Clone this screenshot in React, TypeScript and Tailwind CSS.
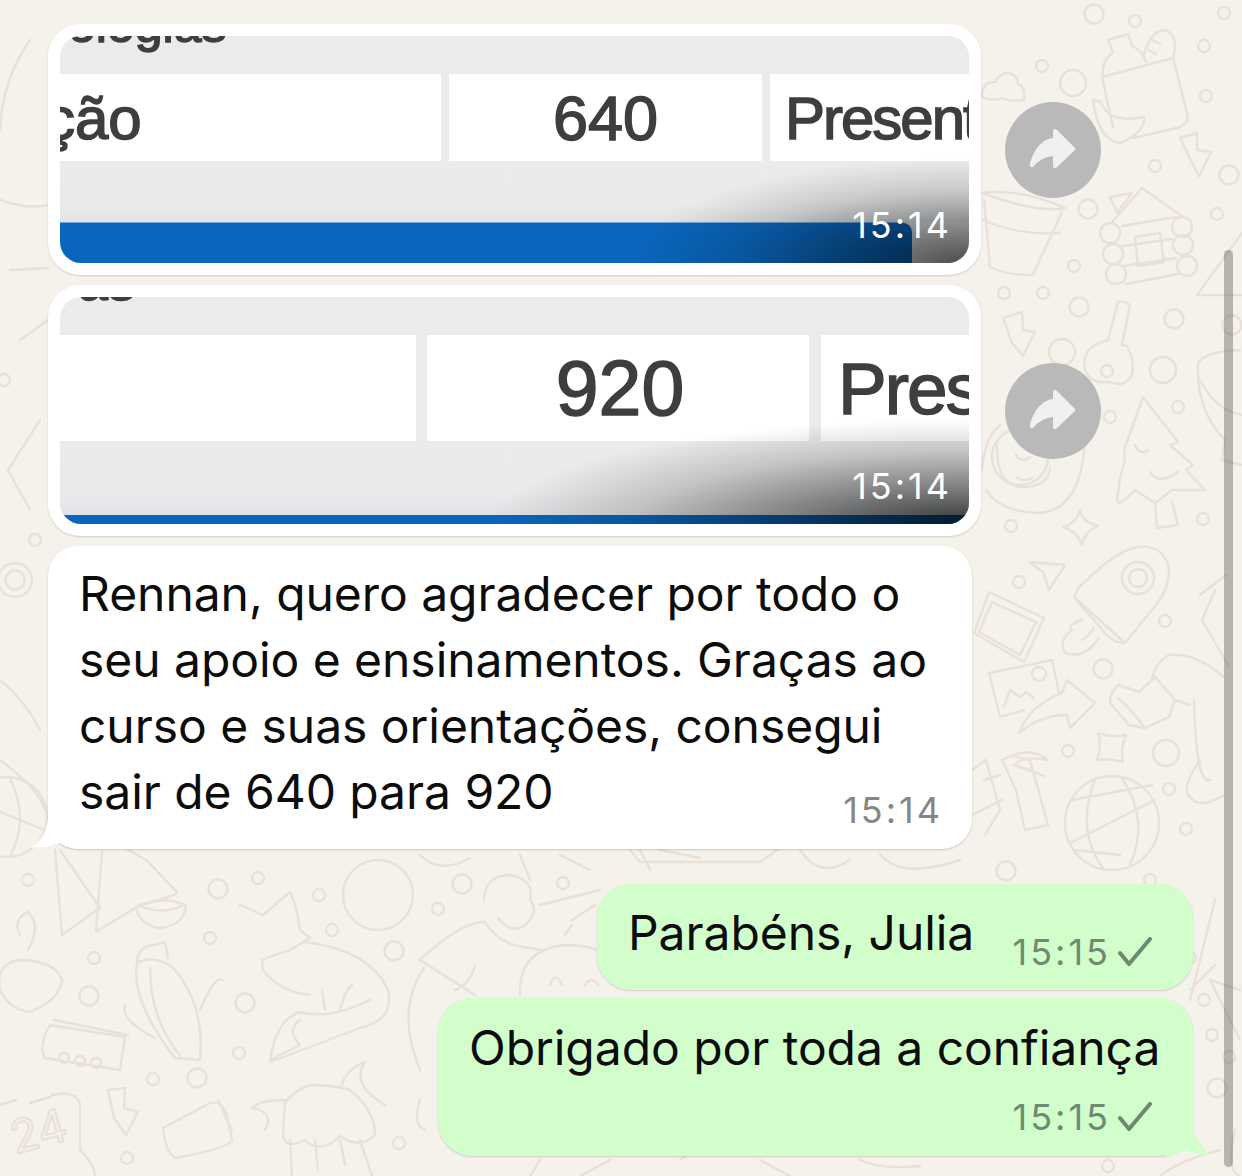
const circles: [number, number, number][] = [
  [1094, 14, 9.5], [1135, 21, 6], [1224, 13, 6], [1204, 46, 6], [1042, 66, 6], [1073, 83, 13], [1206, 96, 6],
  [1155, 166, 6], [1229, 175, 9.5], [1088, 209, 9.5], [1217, 214, 6], [1074, 266, 6], [1004, 293, 6], [1043, 293, 6],
  [1079, 307, 9.5], [1062, 352, 13], [1174, 319, 9.5], [1163, 370, 13], [1178, 407, 6], [1110, 417, 6], [1203, 519, 6],
  [1011, 526, 6], [1107, 371, 6], [1232, 325, 9.5], [1019, 582, 6], [1165, 621, 6], [1103, 669, 9.5], [1068, 751, 6],
  [1166, 753, 13], [1169, 789, 6], [1186, 829, 6], [1006, 871, 9.5], [1150, 880, 6], [28, 880, 6], [218, 889, 9.5],
  [258, 878, 6], [319, 895, 6], [332, 930, 6], [210, 938, 6], [94, 958, 6], [394, 951, 9.5], [89, 996, 9.5],
  [245, 1003, 9.5], [239, 1053, 6], [153, 1079, 6], [197, 1078, 9.5], [127, 1158, 6], [399, 1143, 6], [378, 895, 35],
  [462, 884, 9.5], [438, 909, 6], [563, 883, 6], [1204, 1000, 6], [1217, 1088, 9.5], [15, 580, 9.5], [15, 580, 17],
  [4, 380, 6], [35, 540, 6], [1108, 1166, 6], [1190, 958, 6], [1212, 1035, 6], [1229, 1057, 6],
]

const doodlePaths = [
  // top right: bag, bottle, banana, bolt, cloud, house, bucket
  'M1102 77 L1173 58 L1187 113 Q1190 124 1177 128 L1133 138 M1102 77 L1113 127',
  'M1103 75 Q1101 62 1113 52 L1108 40 L1128 34 L1132 46 Q1142 50 1146 62',
  'M1143 57 Q1150 32 1163 30 Q1176 32 1175 50 L1173 58 M1152 40 L1160 44 M1148 50 L1156 54',
  'M1093 100 L1101 102 Q1108 124 1144 117 Q1146 132 1120 143 Q1098 140 1093 100',
  'M1180 138 L1197 133 L1197 150 L1211 152 L1199 176 L1192 163 Z',
  'M982 97 Q982 82 995 82 Q1002 70 1012 74 Q1018 76 1018 84 Q1026 86 1024 100 Q1010 102 1002 98 Q992 102 982 97',
  'M1112 222 L1142 188 L1183 217 M1110 197 L1132 193 L1117 213 Z M1122 226 L1176 217 M1122 246 L1172 239 M1124 266 L1176 258 M1126 284 L1178 274',
  'M1135 237 L1160 233 L1164 262 L1138 266 Z',
  'M982 193 Q1020 188 1065 208 Q1040 214 982 193 M983 220 Q1020 236 1060 233 M984 200 L990 267 Q1010 276 1033 275 L1062 212',
  'M1197 295 L1242 233 M1197 295 L1242 295',
  // key, avocado, tree, star
  'M1003 318 L1022 312 L1023 330 L1035 332 L1023 356 L1012 343 Z',
  'M1118 302 Q1122 300 1130 305 L1122 345 L1127 346 Q1135 360 1132 375 Q1125 388 1110 382 Q1085 385 1084 362 Q1086 345 1108 340 Z',
  'M982 470 Q984 438 1000 425 M1040 513 Q1000 512 986 490 M1040 513 Q1075 510 1083 460 L1085 440',
  'M997 445 Q996 484 1020 487 Q1048 488 1050 468 M1017 478 Q1025 482 1032 478 M1016 455 Q1022 464 1030 457',
  'M1143 397 L1178 442 L1170 445 L1193 465 L1186 470 L1205 490 L1172 490 L1155 503 L1135 490 Q1118 508 1117 500 L1120 478 L1125 460 L1124 450 Z',
  'M1155 503 L1157 528 L1178 525 L1172 502 M1150 472 Q1158 486 1178 472 M1135 445 Q1140 456 1148 450',
  'M1080 510 Q1082 522 1098 526 Q1084 532 1082 545 Q1078 532 1063 527 Q1076 524 1080 510 Z',
  'M1198 365 Q1200 352 1240 350 M1198 365 Q1196 410 1225 440 L1222 460 L1242 465 M1200 380 Q1215 410 1242 415',
  // rocket, plane, frame, photo, arrow, stocking
  'M1087 580 Q1115 552 1137 547 Q1162 544 1169 567 Q1170 590 1152 610 L1125 643 Q1115 644 1105 633 L1074 597 Q1078 586 1087 580 M1074 597 L1125 643',
  'M1065 653 Q1058 640 1072 630 Q1066 625 1082 620 M1099 638 Q1084 660 1065 653 M1082 640 Q1090 635 1094 628',
  'M1029 562 L1065 565 L1049 590 L1043 572 Z',
  'M989 592 L1044 618 L1024 662 L974 633 Z M992 602 L1036 622 L1020 655 L979 632 Z',
  'M989 673 L1052 660 L1059 692 M1000 717 L989 673 M1004 707 L1010 690 L1020 697 L1026 692 L1034 698 M1000 717 L1024 710',
  'M1019 733 Q1030 705 1062 693 L1067 680 L1095 703 L1070 728 L1067 715 Q1040 715 1019 733 Z',
  'M1119 685 L1139 692 L1155 677 L1175 700 L1169 717 L1145 728 L1129 725 L1110 703 Q1110 690 1119 685 M1118 698 Q1130 708 1145 728',
  'M1152 677 Q1158 660 1169 655 Q1195 652 1224 677 M1175 700 L1190 705 M1194 700 Q1196 785 1210 780 M1200 760 Q1180 790 1190 797 Q1200 810 1224 795',
  'M1098 733 Q1112 738 1126 735 Q1120 750 1123 762 Q1110 758 1097 760 Q1102 745 1098 733 Z',
  'M1215 590 L1202 620 L1228 665 M1200 595 L1226 575',
  // globe
  'M1065 823 a47 47 0 1 0 94 0 a47 47 0 1 0 -94 0 Z M1072 800 L1152 785 M1070 843 L1155 800 M1075 850 L1120 855 M1095 780 Q1075 830 1103 868 M1122 778 Q1150 820 1130 865',
  // bamboo and palm at right of message
  'M972 770 L986 760 L1000 810 L985 835 M1002 760 L1016 790 L1025 830 L1048 825 L1030 760 L1012 756 M1002 760 Q1030 745 1048 760 Q1025 755 1014 765 Q1030 770 1044 776 M984 780 L1000 775 M972 815 L1002 800',
  // bottom left: lamp, megaphone, fox, cactus, box, calendar, bolt, jar, hut
  'M55 850 L62 935 L100 908 L60 850 M102 852 L96 932 L140 905 Q180 895 177 892 L146 860 L120 845',
  'M136 908 Q140 925 160 928 Q185 925 186 905 Q160 895 136 908 M140 906 Q162 915 182 906',
  'M20 935 Q12 920 28 912 Q42 925 28 950 M18 960 Q-5 965 0 990 Q10 1010 30 1012 Q60 1000 62 980 Q55 960 18 960',
  'M240 905 L263 915 L290 892 Q297 905 300 930 L310 938 L290 950 L275 955 L262 960 L263 970 Q280 992 310 995 M305 942 Q370 950 388 990 Q395 1020 360 1028 L270 1062 Q275 1020 300 1012 Q330 1020 370 1000 M340 1010 Q345 990 352 985 M322 990 L325 1010 M300 1020 Q286 1030 300 1045 L270 1060',
  'M137 960 Q140 945 155 945 L165 942 L168 958 M137 963 Q130 1000 175 1058 L200 1060 Q205 1000 170 965 Q150 955 137 963 M150 968 Q150 1020 182 1058 M125 1005 Q120 1020 155 1038 M200 1010 Q215 975 222 980',
  'M50 1025 L125 1037 L120 1070 L45 1058 Q38 1045 50 1025 M54 1020 L128 1035',
  'M64 1053 a5 5 0 1 0 .1 0 M80 1056 a5 5 0 1 0 .1 0 M96 1058 a5 5 0 1 0 .1 0',
  'M0 1105 L16 1100 M30 1103 L50 1097 M52 1095 Q78 1090 80 1105 L80 1150 Q95 1165 95 1176',
  'M108 1090 L125 1088 L124 1108 L138 1112 L126 1135 L114 1118 Z',
  'M163 1128 L210 1103 Q220 1100 226 1112 L232 1140 Q230 1148 175 1158 Q165 1150 163 1128 M218 1100 L232 1130',
  'M285 1103 Q295 1090 310 1085 Q335 1085 350 1090 Q375 1110 375 1135 Q360 1150 340 1136 Q320 1155 305 1140 Q285 1150 283 1135 Z M290 1140 L292 1176 M360 1140 L372 1176 M315 1140 L318 1170 M340 1140 L345 1165',
  'M285 1100 Q260 1100 252 1108 Q275 1112 265 1130 M342 1085 Q345 1070 365 1062 Q350 1085 385 1105',
  // under the first outgoing bubble: man and round face
  'M484 900 Q485 875 510 875 Q535 880 530 900 Q540 912 525 925 Q512 935 498 918 M485 922 Q460 922 420 960 L475 995 M485 922 Q498 945 530 948 L540 950 M475 965 Q470 985 455 990 M424 968 Q395 1010 420 1070 M420 1100 Q412 1125 425 1130',
  'M520 995 Q518 950 565 945 Q590 945 600 952 M550 985 Q555 970 562 985 M585 985 Q592 975 598 985',
  'M540 905 L600 890 M572 920 L595 905 M572 925 L565 935',
  'M680 1160 Q690 1150 720 1155 M760 1160 L790 1176 M860 1160 Q880 1170 920 1166 M540 1160 L530 1176 M610 1160 L580 1176',
  'M630 850 L640 862 L760 862 L780 848 M640 850 L650 870 M660 850 L700 858 M800 850 Q820 880 850 860 M880 854 Q900 880 960 860 M420 855 Q440 875 470 858 M520 855 L530 880 M560 855 L590 870',
  'M30 40 Q2 80 0 130 M10 270 L48 268 M0 200 Q28 210 48 205 M40 420 L8 470 L30 510 M0 680 Q25 700 40 730 M0 760 Q40 790 45 810 M20 340 L48 320',
  'M7 777 a40 40 0 1 0 .1 0 M-30 800 L45 830 M10 778 Q30 820 10 856',
  'M1160 1176 Q1180 1160 1220 1150 M1190 1000 L1215 900 M1215 965 L1190 990 M1240 990 L1210 980 L1240 1040 M1235 1130 Q1225 1170 1240 1176',
]

const TIME = '[font-family:Inter,sans-serif] tracking-[3px]'
const IMAGE_TEXT = "[font-family:'Liberation_Sans',sans-serif] text-[#3e3e3e] [-webkit-text-stroke:1.5px_#3e3e3e] blur-[0.7px] whitespace-nowrap"

function Doodles() {
  return (
    <svg className="absolute inset-0" width="1242" height="1176" viewBox="0 0 1242 1176" fill="none" stroke="#e9e0d7" strokeWidth="2.4" strokeLinejoin="round" strokeLinecap="round">
      {circles.map(([x, y, r], i) => <circle key={i} cx={x} cy={y} r={r} />)}
      {doodlePaths.map((d, i) => <path key={i} d={d} />)}
      {/* logs on the cabin */}
      <circle cx="1110" cy="233" r="10" />
      <circle cx="1113" cy="254" r="10" />
      <circle cx="1116" cy="274" r="10" />
      <circle cx="1182" cy="227" r="10" />
      <circle cx="1183" cy="245" r="10" />
      <circle cx="1187" cy="266" r="10" />
      <circle cx="1020" cy="457" r="28" />
      <circle cx="1138" cy="578" r="16" />
      <circle cx="1138" cy="578" r="9" />
      <circle cx="1039" cy="674" r="7" />
      <text x="12" y="1150" fontSize="46" fontFamily="Inter, sans-serif" strokeWidth="2" transform="rotate(-15 30 1140)">24</text>
    </svg>
  )
}

function Forward() {
  return (
    <div className="w-24 h-24 rounded-full bg-[#b9b9b9] flex items-center justify-center ml-6 shrink-0">
      <svg width="48" height="48" viewBox="0 0 48 48">
        <path d="M26 3 Q24 3 24 6 L24 12 Q8 14 1 37 Q0 42 4 41 Q12 31 24 30 L24 39 Q24 43 27 42 L46 24 Q47 23 46 22 L28 4 Q27 3 26 3 Z" fill="#f0f0f2" />
      </svg>
    </div>
  )
}

function Check() {
  return (
    <svg width="36" height="30" viewBox="0 0 36 30" fill="none" stroke="#6d8a70" strokeWidth="4" strokeLinecap="round" strokeLinejoin="round">
      <path d="M3 16 L12 27 L33 2" />
    </svg>
  )
}

function PhotoBubble({ children, time, overlay }: { children: React.ReactNode; time: string; overlay: string }) {
  return (
    <div className="flex items-center pl-12">
      <div className="w-[933px] h-[251px] bg-white rounded-[32px] p-3 shadow-[0_1px_2px_rgba(0,0,0,0.15)] shrink-0">
        <div className="relative w-[909px] h-[227px] rounded-[21px] overflow-hidden bg-[#ebebeb] flex flex-col">
          {children}
          <div className={`absolute inset-0 ${overlay}`} />
          <span className={`absolute right-[17px] bottom-[20px] text-white text-[36px] leading-[36px] ${TIME}`}>{time}</span>
        </div>
      </div>
      <Forward />
    </div>
  )
}

export default function App() {
  return (
    <div className="relative w-[1242px] h-[1176px] overflow-hidden bg-[#f5f1eb] [font-family:Inter,sans-serif]">
      <Doodles />
      <div className="relative flex flex-col pt-6">
        <PhotoBubble time="15:14" overlay="bg-[radial-gradient(340px_105px_at_100%_100%,rgba(0,0,0,0.68)_0%,rgba(0,0,0,0.42)_35%,rgba(0,0,0,0.14)_70%,rgba(0,0,0,0)_100%)]">
          <div className="h-[38px] overflow-hidden pl-2 shrink-0">
            <p className={`text-[50px] leading-[50px] -mt-[36px] ${IMAGE_TEXT}`}>ologias</p>
          </div>
          <div className="flex gap-2 h-[87px] shrink-0">
            <div className="w-[381px] bg-white overflow-hidden flex items-center pt-[2px] shrink-0">
              <span className={`text-[60px] -ml-[15px] ${IMAGE_TEXT}`}>ção</span>
            </div>
            <div className="w-[313px] bg-white flex items-center justify-center pt-[2px] shrink-0">
              <span className={`text-[63px] ${IMAGE_TEXT}`}>640</span>
            </div>
            <div className="flex-1 bg-white overflow-hidden flex items-center pl-[15px] pt-[2px]">
              <span className={`text-[60px] tracking-[-2px] ${IMAGE_TEXT}`}>Present</span>
            </div>
          </div>
          <div className="h-[61px] shrink-0 bg-gradient-to-b from-[#ebebeb] from-70% to-[#e2e4e6]" />
          <div className="h-[41px] w-[852px] bg-[#0a66bd] border-t border-[#6fa8dc] rounded-tr-[10px] shrink-0" />
        </PhotoBubble>

        <div className="mt-[10px]">
          <PhotoBubble time="15:14" overlay="bg-[radial-gradient(480px_105px_at_100%_100%,rgba(0,0,0,0.76)_0%,rgba(0,0,0,0.46)_35%,rgba(0,0,0,0.16)_70%,rgba(0,0,0,0)_100%)]">
            <div className="h-[38px] overflow-hidden pl-[18px] shrink-0">
              <p className={`text-[54px] leading-[54px] -mt-[43px] ${IMAGE_TEXT}`}>as</p>
            </div>
            <div className="flex h-[106px] shrink-0">
              <div className="w-[356px] bg-white shrink-0" />
              <div className="w-[382px] ml-[11px] pl-1 pt-[2px] bg-white flex items-center justify-center shrink-0">
                <span className={`text-[77px] ${IMAGE_TEXT}`}>920</span>
              </div>
              <div className="flex-1 ml-3 bg-white overflow-hidden flex items-center pl-[17px] pt-[2px]">
                <span className={`text-[73px] tracking-[-2px] ${IMAGE_TEXT}`}>Pres</span>
              </div>
            </div>
            <div className="h-[74px] shrink-0 bg-gradient-to-b from-[#ebebeb] from-70% to-[#e0e3e7]" />
            <div className="h-[9px] bg-[#0a66bd] shrink-0" />
          </PhotoBubble>
        </div>

        <div className="relative w-[924px] h-[303px] ml-12 mt-[10px] bg-white rounded-[30px] pl-[31px] pt-[15px] pr-[29px] shadow-[0_1px_2px_rgba(0,0,0,0.18)] text-[48px] leading-[66px] tracking-[-0.05px] text-[#0c0c0c]">
          <p className="whitespace-nowrap">Rennan, quero agradecer por todo o</p>
          <p className="whitespace-nowrap">seu apoio e ensinamentos. Graças ao</p>
          <p className="whitespace-nowrap">curso e suas orientações, consegui</p>
          <div className="flex justify-between items-end">
            <span className="whitespace-nowrap">sair de 640 para 920</span>
            <span className={`text-[36px] leading-[36px] text-[#868686] mb-[-3px] ${TIME}`}>15:14</span>
          </div>
          <svg className="absolute left-[-18px] bottom-0" width="48" height="30" viewBox="0 0 48 30">
            <path d="M18 0 Q16 20 0 28.5 Q18 29 32 23 Q40 29 48 29 L48 0 Z" fill="#ffffff" />
          </svg>
        </div>

        <div className="self-end mr-[49px] mt-[35px] w-[596px] h-[106px] bg-[#d1fecb] rounded-[34px] pl-[31px] pr-[40px] flex items-start justify-between shadow-[0_1px_2px_rgba(0,0,0,0.15)] text-[48px] leading-[66px] tracking-[-0.05px] text-[#0c0c0c]">
          <span className="mt-[16px] whitespace-nowrap">Parabéns, Julia</span>
          <div className="flex items-center gap-[6px] mt-[50px]">
            <span className={`text-[36px] leading-[36px] text-[#6f8a72] ${TIME}`}>15:15</span>
            <Check />
          </div>
        </div>

        <div className="relative self-end mr-[49px] mt-2 w-[755px] h-[158px] bg-[#d1fecb] rounded-[34px] pl-[31px] pr-[40px] pt-[17px] shadow-[0_1px_2px_rgba(0,0,0,0.15)] text-[48px] leading-[66px] tracking-[-0.05px] text-[#0c0c0c]">
          <p className="whitespace-nowrap">Obrigado por toda a confiança</p>
          <div className="flex items-center justify-end gap-[6px] mt-[18px]">
            <span className={`text-[36px] leading-[36px] text-[#6f8a72] ${TIME}`}>15:15</span>
            <Check />
          </div>
          <svg className="absolute right-[-19px] bottom-0" width="46" height="32" viewBox="0 0 46 32">
            <path d="M27 0 Q28 18 45 31 Q30 31 18 26 Q10 32 0 32 L0 0 Z" fill="#d1fecb" />
          </svg>
        </div>
      </div>

      {/* scroll bar */}
      <div className="absolute left-[1224px] top-[250px] w-[9px] h-[917px] rounded-full bg-black/25" />
    </div>
  )
}
